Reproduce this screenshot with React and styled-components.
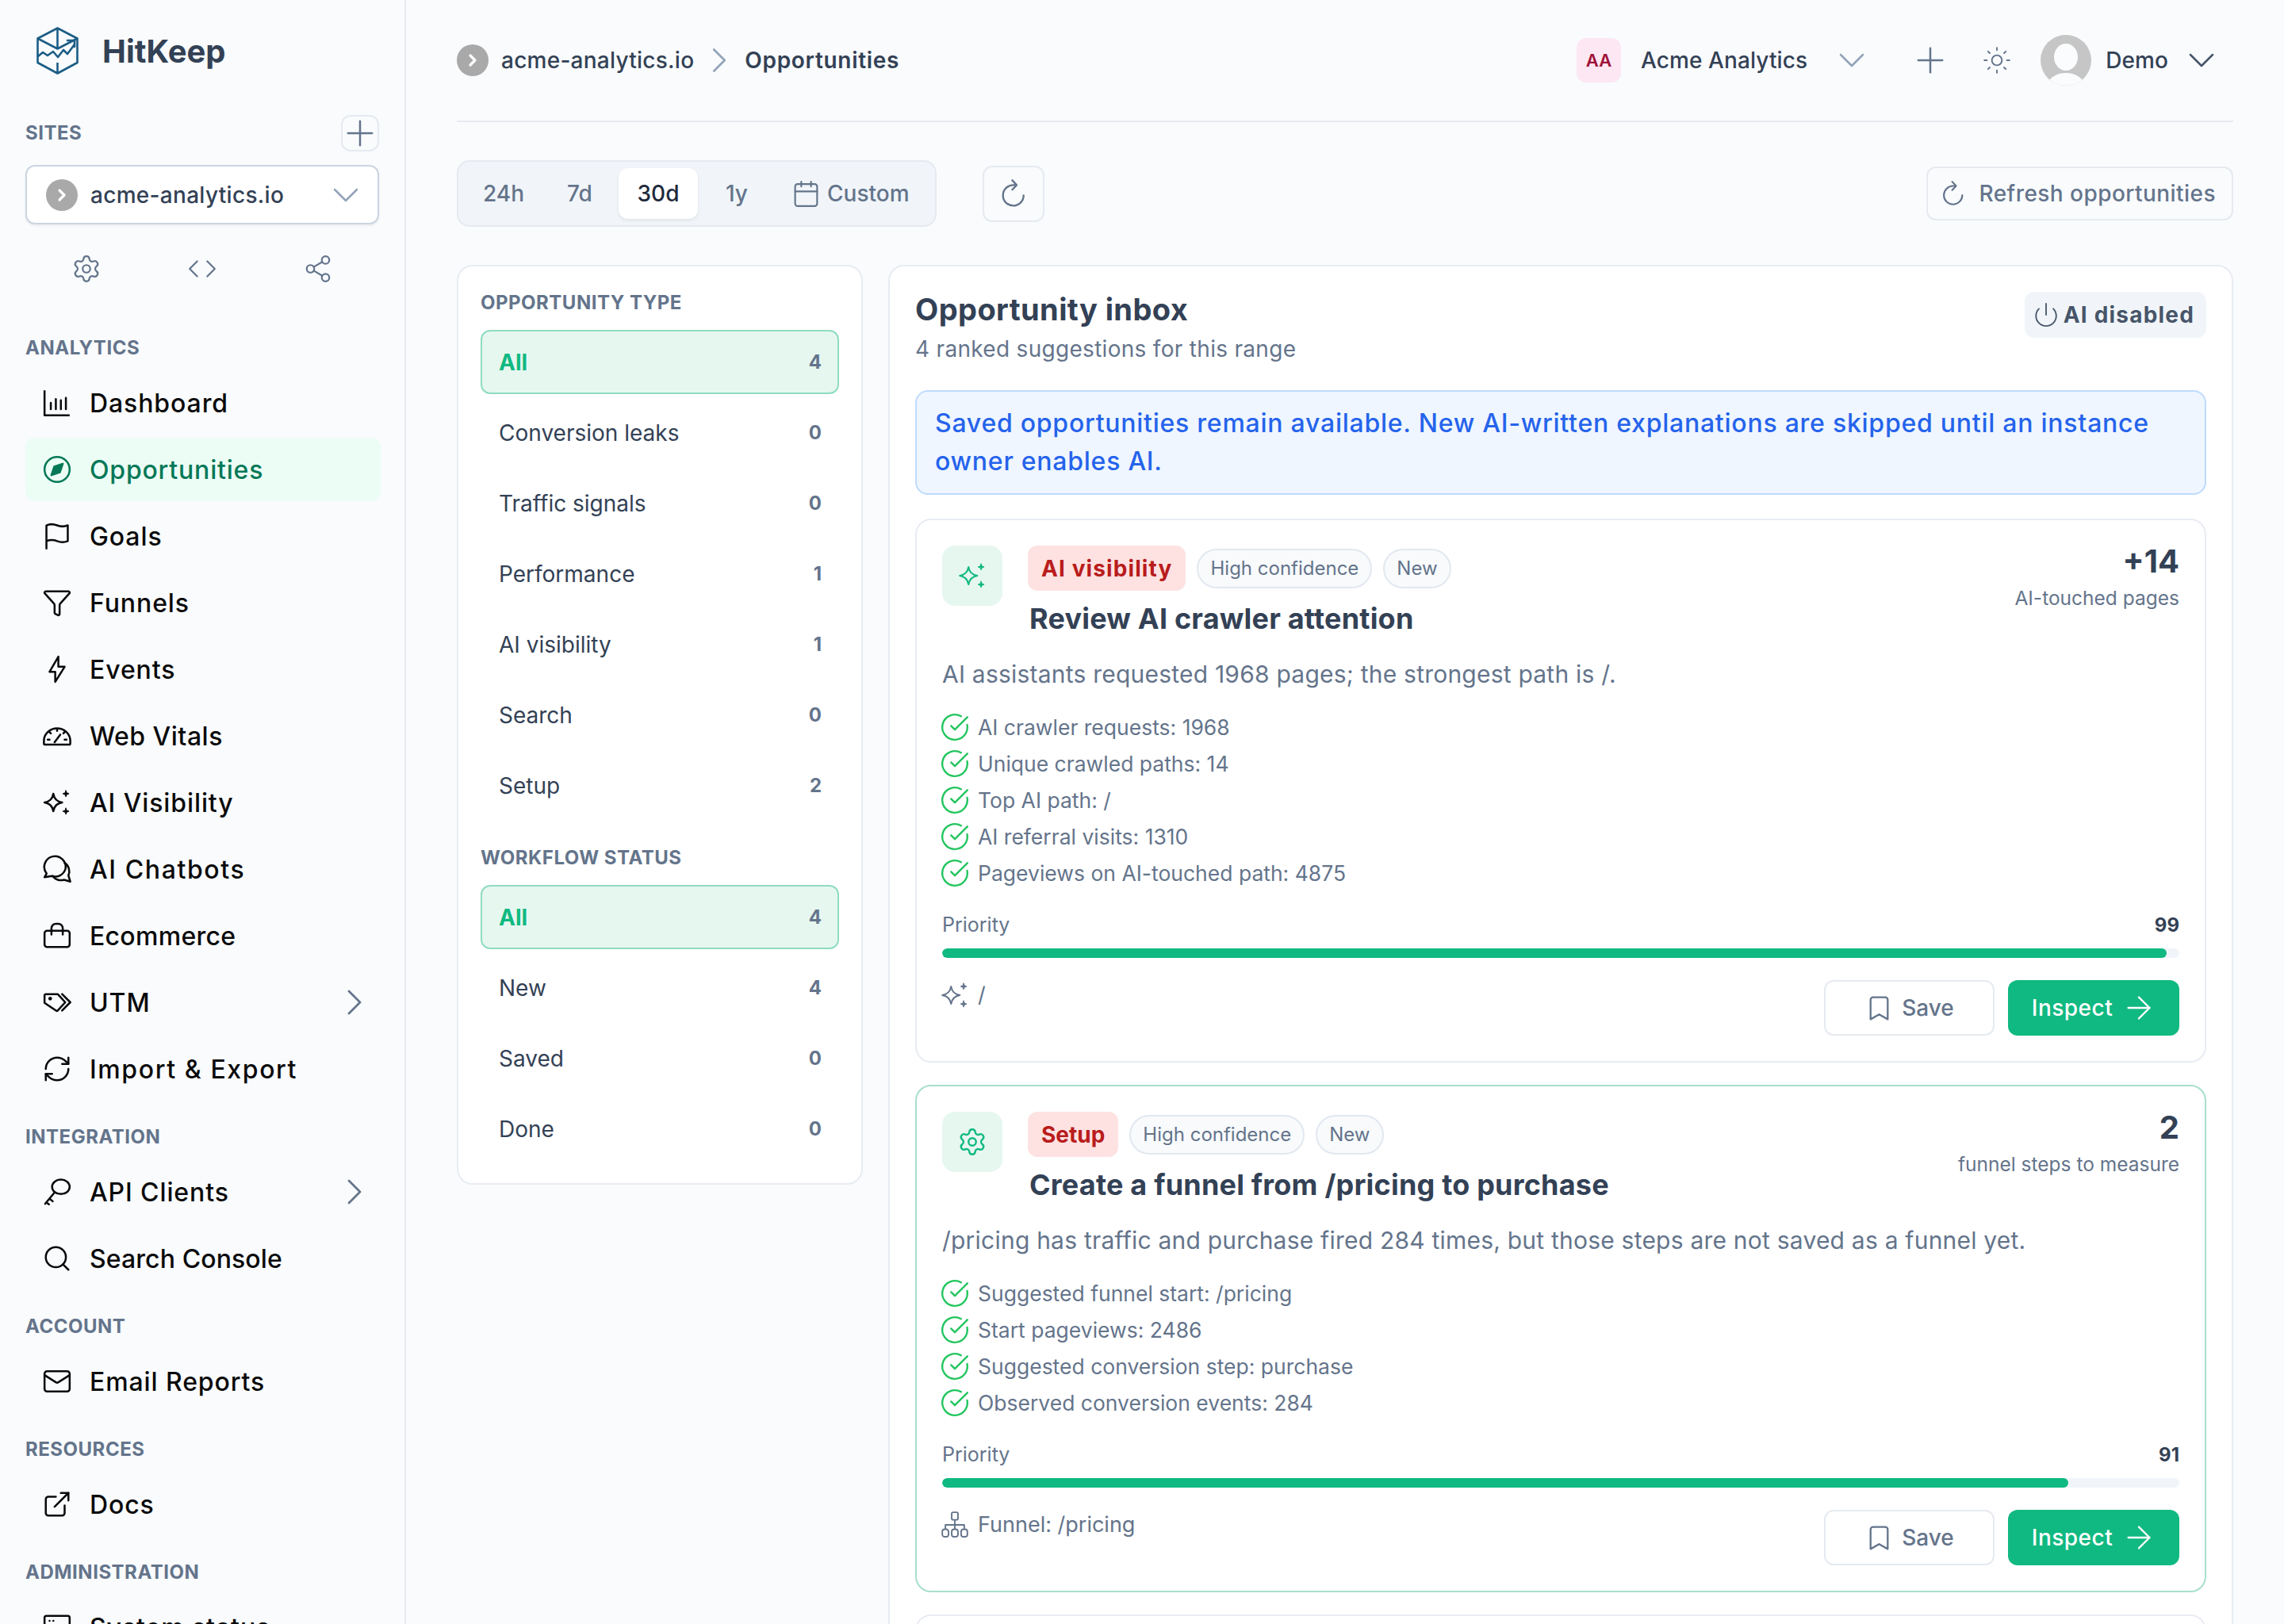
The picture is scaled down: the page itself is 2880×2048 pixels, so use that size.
import React from 'react';
import styled, { createGlobalStyle } from 'styled-components';
import {
  ArrowRight,
  Bookmark,
  Calendar,
  ChevronDown,
  ChevronRight,
  CircleCheckBig,
  Code,
  ExternalLink,
  Funnel,
  Mail,
  Plus,
  Power,
  RefreshCw,
  Search,
  Settings,
  Share2,
  Sun,
} from 'lucide-react';

const GlobalStyle = createGlobalStyle`
  html, body {
    margin: 0;
    padding: 0;
    background: #f9fbfd;
  }
  body {
    font-family: Inter, "Liberation Sans", sans-serif;
    color: #334155;
  }
  * { box-sizing: border-box; }
`;

const Ico = ({ size = 38, sw = 1.6, children }) => (
  <svg
    width={size}
    height={size}
    viewBox="0 0 24 24"
    fill="none"
    stroke="currentColor"
    strokeWidth={sw}
    strokeLinecap="round"
    strokeLinejoin="round"
  >
    {children}
  </svg>
);

const ChartIcon = () => (
  <Ico>
    <path d="M2 2v20h20" strokeLinecap="butt" />
    <path d="M7 17v-5M11 17V9M15 17v-7M19 17V8" />
  </Ico>
);
const CompassIcon = () => (
  <Ico>
    <circle cx="12" cy="12" r="10" />
    <path d="M16.5 7.5l-2.3 6.7-6.7 2.3 2.3-6.7z" fill="currentColor" />
  </Ico>
);
const FlagIcon = () => (
  <Ico>
    <path d="M3.5 22V3.5c3.5-1.6 6-1 8.5 0s5 1.4 8.5 0v12.500c-3.5 1.4-6 1-8.5 0s-5-1.4-8.5 0" />
  </Ico>
);
const BoltIcon = () => (
  <Ico>
    <path d="M13 2v8h5l-7.5 12v-8H6z" />
  </Ico>
);
const GaugeIcon = () => (
  <Ico>
    <path d="M1.5 16a10.5 10 0 0 1 21 0v2a1 1 0 0 1-1 1h-19a1 1 0 0 1-1-1z" />
    <path d="M12 6.5v1.500M6 9l1 1M18 9l-1 1M4.500 15H6M18 15h1.500M10 17l4.500-6" />
  </Ico>
);
const SparkIcon = ({ sw = 1.6 }) => (
  <Ico sw={sw}>
    <path d="M9 5c.6 4 2.7 6.3 7 7-4.3.7-6.4 3-7 7-.6-4-2.7-6.3-7-7 4.3-.7 6.4-3 7-7z" />
    <path
      d="M19 2.500l.7 1.800 1.800.7-1.800.7-.7 1.800-.7-1.800-1.800-.7 1.800-.7zM19 16.500l.7 1.800 1.800.7-1.800.7-.7 1.800-.7-1.800-1.800-.7 1.800-.7z"
      fill="currentColor"
      strokeWidth="0.6"
    />
  </Ico>
);
const ChatIcon = () => (
  <Ico>
    <path d="M2 18.500l1.600-3A8.500 8.500 0 1 1 18.600 12a8.500 8.500 0 0 1-11 5.500z" />
    <path d="M18 7a8 8 0 0 1 3 10l1.500 5-5-1.500a8 8 0 0 1-9-3" />
  </Ico>
);
const BagIcon = () => (
  <Ico>
    <rect x="2" y="8" width="20" height="13" rx="2" />
    <path d="M7.500 11V6A3.500 3.500 0 0 1 11 2.500h2A3.500 3.500 0 0 1 16.500 6v5" />
  </Ico>
);
const TagsIcon = () => (
  <Ico>
    <path d="M2 6.500a1 1 0 0 1 1-1h9.500l6 6.500-6 6.500a1 1 0 0 1-1.300.1L2 12.500z" />
    <path d="M16 5.500l6.500 6.500-6.500 6.500" />
    <circle cx="6.500" cy="9" r=".7" fill="currentColor" />
  </Ico>
);
const KeyIcon = () => (
  <Ico>
    <ellipse cx="15" cy="8" rx="7" ry="5.800" />
    <path d="M10 12.500L2.500 21.500M6 17.500l2.500 2M3.500 20.500l2 1.500" />
  </Ico>
);
const ServerIcon = () => (
  <Ico>
    <rect x="2" y="3" width="20" height="8" rx="1.500" />
    <path d="M6 7h.01M9 7h.01" />
  </Ico>
);
const OrgIcon = () => (
  <Ico sw={1.2}>
    <rect x="9.500" y="2" width="5" height="6" rx="1.200" />
    <path d="M12 8v7M4.500 15v-3h15v3" />
    <rect x="2" y="15.500" width="5" height="6" rx="2" />
    <rect x="9.500" y="15.500" width="5" height="6" rx="2" />
    <rect x="17" y="15.500" width="5" height="6" rx="2" />
  </Ico>
);
const ReloadIcon = ({ size = 38 }) => (
  <Ico size={size} sw={1.5}>
    <path d="M20 13.500a8.200 8.200 0 1 1-8.200-8.200h1.700" />
    <path d="M11 1.500l3.500 3.800L11 9" />
  </Ico>
);

const LogoMark = () => (
  <svg width="53" height="60" viewBox="0 0 53 60" fill="none" stroke="#1c5d85" strokeWidth="2.600" strokeLinejoin="round">
    <path d="M26.500 1.500L51.500 14.500V45L26.500 58.500 1.500 45V14.500z" />
    <path d="M1.500 14.500L26.500 27.500 51.500 14.500M26.500 1.500V27.500M26.500 45V58.500" />
    <path d="M2 37l6-5 6 4 7-5 6 7 7-9 5 5 9-12" strokeLinecap="round" />
    <path d="M39 17h9v8" strokeLinecap="round" />
  </svg>
);

const Avatar = () => (
  <svg width="64" height="64" viewBox="0 0 64 64">
    <defs>
      <clipPath id="avatar-clip">
        <circle cx="32" cy="32" r="32" />
      </clipPath>
    </defs>
    <g clipPath="url(#avatar-clip)">
      <rect width="64" height="64" fill="#c6c6c6" />
      <ellipse cx="32" cy="28" rx="15" ry="17" fill="#fbfcfd" />
      <ellipse cx="32" cy="66" rx="24" ry="18" fill="#fbfcfd" />
    </g>
  </svg>
);

const SiteDot = () => (
  <DotWrap>
    <ChevronRight size={24} strokeWidth={3.2} color="#fff" />
  </DotWrap>
);

const Page = styled.div`
  display: flex;
  width: 2880px;
  height: 2048px;
  overflow: hidden;
  background: #f9fbfd;
`;

/* lucide glyphs keep a margin inside their grid, so they sit oversized in a fixed slot */
const IconSlot = styled.span`
  display: flex;
  align-items: center;
  justify-content: center;
  flex: 0 0 32px;
  width: 32px;
  height: 32px;
  margin-left: ${(p) => (p.$auto ? 'auto' : `${p.$gap || 0}px`)};
  color: ${(p) => p.$color || 'currentColor'};
  svg {
    flex: none;
  }
`;

const Sidebar = styled.aside`
  flex: 0 0 512px;
  border-right: 2px solid #e6eaf0;
  padding: 34px 30px 0 32px;
`;

const Brand = styled.div`
  display: flex;
  align-items: center;
  gap: 30px;
  height: 60px;
  padding-left: 14px;
`;

const BrandName = styled.span`
  font-size: 40px;
  font-weight: 700;
  color: #334155;
`;

const SitesHead = styled.div`
  display: flex;
  align-items: center;
  justify-content: space-between;
  height: 46px;
  margin-top: 51px;
`;

const Label = styled.div`
  font-size: 24px;
  line-height: 32px;
  font-weight: 700;
  letter-spacing: 0.5px;
  text-transform: uppercase;
  color: #64748b;
`;

const MiniButton = styled.button`
  display: flex;
  align-items: center;
  justify-content: center;
  width: 48px;
  height: 46px;
  margin-right: 2px;
  padding: 0;
  border: 2px solid #e6eaf0;
  border-radius: 12px;
  background: #f9fbfd;
  color: #64748b;
  svg {
    flex: none;
  }
`;

const SiteSelect = styled.div`
  display: flex;
  align-items: center;
  gap: 16px;
  width: 446px;
  height: 75px;
  margin-top: 17px;
  padding: 0 24px;
  border: 2px solid #cbd5e1;
  border-radius: 12px;
  background: #fff;
  box-shadow: 0 2px 3px rgba(15, 23, 42, 0.06);
  color: #334155;
  font-size: 28px;
  font-weight: 500;
  letter-spacing: 0.3px;
`;

const DotWrap = styled.span`
  display: flex;
  align-items: center;
  justify-content: center;
  flex: 0 0 40px;
  height: 40px;
  border-radius: 50%;
  background: #a9a9a9;
`;

const SiteTools = styled.div`
  display: flex;
  align-items: center;
  justify-content: center;
  gap: 114px;
  width: 446px;
  height: 40px;
  margin-top: 36px;
  color: #64748b;
`;

const NavSection = styled.section`
  margin-top: ${(p) => p.$top || 30}px;
`;

const NavList = styled.div`
  display: flex;
  flex-direction: column;
  gap: 4px;
  margin-top: 13px;
`;

const NavItem = styled.div`
  display: flex;
  align-items: center;
  gap: 25px;
  height: 80px;
  padding: 0 17px 0 24px;
  border-radius: 12px;
  font-size: 32px;
  font-weight: 500;
  letter-spacing: ${(p) => p.$track ?? 0.9}px;
  color: ${(p) => (p.$active ? '#047857' : '#0a0a0a')};
  background: ${(p) => (p.$active ? '#ecfdf5' : 'transparent')};
`;

const Main = styled.main`
  flex: 1;
  min-width: 0;
  padding: 0 64px;
`;

const Topbar = styled.header`
  display: flex;
  align-items: center;
  height: 154px;
  padding-right: 24px;
  border-bottom: 2px solid #e6eaf0;
  font-size: 28px;
  font-weight: 500;
`;

const Crumb = styled.span`
  margin-left: 16px;
  color: #334155;
  font-weight: ${(p) => (p.$strong ? 600 : 500)};
  letter-spacing: ${(p) => (p.$strong ? 0.7 : 0.25)}px;
`;

const TeamMark = styled.span`
  display: flex;
  align-items: center;
  justify-content: center;
  width: 56px;
  height: 56px;
  margin-left: auto;
  border-radius: 12px;
  background: #fce7f3;
  color: #9f1239;
  font-size: 22px;
  font-weight: 600;
`;

const TopText = styled.span`
  margin-left: ${(p) => p.$gap}px;
  color: #334155;
  letter-spacing: 0.1px;
`;

const AvatarSlot = styled.span`
  display: flex;
  margin-left: 39px;
`;

const Toolbar = styled.div`
  display: flex;
  align-items: center;
  height: 84px;
  margin-top: 48px;
`;

const Range = styled.div`
  display: flex;
  align-items: center;
  gap: 2px;
  height: 84px;
  padding: 0 8px 0 10px;
  border: 2px solid #e6eaf0;
  border-radius: 16px;
  background: #f1f5f9;
`;

const RangeTab = styled.button`
  display: flex;
  align-items: center;
  justify-content: center;
  gap: 8px;
  min-width: ${(p) => (p.$active ? 100 : 94)}px;
  height: 64px;
  padding: ${(p) => (p.$wide ? '0 24px 0 20px' : '0 20px')};
  border: 0;
  border-radius: 12px;
  background: ${(p) => (p.$active ? '#fff' : 'transparent')};
  box-shadow: ${(p) => (p.$active ? '0 2px 4px rgba(15, 23, 42, 0.08)' : 'none')};
  color: ${(p) => (p.$active ? '#1e293b' : '#64748b')};
  font: 500 28px Inter, "Liberation Sans", sans-serif;
`;

const ReloadButton = styled.button`
  display: flex;
  align-items: center;
  justify-content: center;
  width: 78px;
  height: 71px;
  margin-left: 58px;
  padding: 0;
  border: 2px solid #e6eaf0;
  border-radius: 12px;
  background: transparent;
  color: #64748b;
`;

const RefreshButton = styled.button`
  display: flex;
  align-items: center;
  gap: 15px;
  height: 68px;
  margin-left: auto;
  padding: 0 20px 0 15px;
  border: 2px solid #e6eaf0;
  border-radius: 12px;
  background: transparent;
  color: #64748b;
  font: 500 28px Inter, "Liberation Sans", sans-serif;
  letter-spacing: 0.45px;
`;

const Columns = styled.div`
  display: flex;
  align-items: flex-start;
  gap: 32px;
  margin-top: 48px;
`;

const FilterCard = styled.nav`
  flex: 0 0 512px;
  padding: 30px 28px 28px;
  border: 2px solid #e8ecf2;
  border-radius: 20px;
  background: #fff;
`;

const FilterLabel = styled(Label)`
  margin-top: ${(p) => p.$top || 0}px;
`;

const FilterList = styled.div`
  display: flex;
  flex-direction: column;
  gap: 8px;
  margin-top: 18px;
`;

const FilterRow = styled.div`
  display: flex;
  align-items: center;
  justify-content: space-between;
  height: 81px;
  padding: 0 20px 0 21px;
  border: 2px solid ${(p) => (p.$active ? '#8fdcc0' : 'transparent')};
  border-radius: 12px;
  background: ${(p) => (p.$active ? '#e6f7f0' : 'transparent')};
  font-size: 28px;
  font-weight: ${(p) => (p.$active ? 700 : 400)};
  color: ${(p) => (p.$active ? '#10b981' : '#334155')};
`;

const FilterCount = styled.span`
  font-size: 24px;
  font-weight: 700;
  color: #64748b;
`;

const Inbox = styled.section`
  flex: 1;
  min-width: 0;
  height: 1900px;
  padding: 32px;
  border: 2px solid #e8ecf2;
  border-radius: 20px;
  background: #fff;
`;

const InboxHead = styled.div`
  display: flex;
  align-items: flex-start;
  justify-content: space-between;
  height: 93px;
`;

const InboxTitle = styled.h2`
  margin: -2px 0 0;
  font-size: 38px;
  line-height: 48px;
  font-weight: 700;
  letter-spacing: 0.4px;
  color: #334155;
`;

const InboxSub = styled.p`
  margin: 6px 0 0;
  font-size: 28px;
  line-height: 40px;
  letter-spacing: 0.3px;
  color: #64748b;
`;

const AiChip = styled.span`
  display: flex;
  align-items: center;
  gap: 5px;
  height: 58px;
  padding: 0 15px 0 10px;
  border-radius: 12px;
  background: #f1f5f9;
  color: #475569;
  font-size: 28px;
  font-weight: 700;
  letter-spacing: 1.2px;
`;

const Notice = styled.div`
  margin-top: 31px;
  padding: 16px 23px;
  border: 2px solid #bfdbfe;
  border-radius: 16px;
  background: #eff6ff;
  color: #2563eb;
  font-size: 32px;
  line-height: 48px;
  font-weight: 500;
  letter-spacing: 0.75px;
`;

const OppList = styled.div`
  display: flex;
  flex-direction: column;
  gap: 28px;
  margin-top: 30px;
`;

const OppCard = styled.article`
  padding: 32px;
  border: 2px solid ${(p) => (p.$accent ? '#a7dfca' : '#e8ecf2')};
  border-radius: 20px;
  background: #fff;
`;

const OppHead = styled.div`
  display: flex;
  align-items: flex-start;
  gap: 32px;
`;

const Tile = styled.span`
  display: flex;
  align-items: center;
  justify-content: center;
  flex: 0 0 76px;
  height: 76px;
  border-radius: 16px;
  background: #e6f7f0;
  color: #10b981;
`;

const OppHeadBody = styled.div`
  flex: 1;
  min-width: 0;
`;

const BadgeRow = styled.div`
  display: flex;
  align-items: center;
  gap: 14px;
  height: 57px;
`;

const KindBadge = styled.span`
  display: flex;
  align-items: center;
  height: 57px;
  padding: 0 17px;
  border-radius: 12px;
  background: #fee2e2;
  color: #b91c1c;
  font-size: 28px;
  font-weight: 700;
  letter-spacing: ${(p) => p.$track || 0}px;
`;

const Pill = styled.span`
  display: flex;
  align-items: center;
  height: 50px;
  padding: 0 15px;
  border: 2px solid #e2e8f0;
  border-radius: 25px;
  background: #f8fafc;
  color: #64748b;
  font-size: 24px;
`;

const OppTitle = styled.h3`
  margin: 7px 0 0 2px;
  font-size: 36px;
  line-height: 56px;
  font-weight: 700;
  letter-spacing: 0.2px;
  color: #334155;
`;

const Score = styled.div`
  flex: 0 0 auto;
  text-align: right;
`;

const ScoreValue = styled.div`
  margin-top: -2px;
  font-size: 40px;
  line-height: 44px;
  font-weight: 700;
  color: #334155;
`;

const ScoreCaption = styled.div`
  margin-top: 6px;
  font-size: 24.5px;
  line-height: 36px;
  color: #64748b;
`;

const OppText = styled.p`
  margin: 18px 0 0;
  font-size: 30px;
  line-height: 48px;
  letter-spacing: 0.22px;
  color: #64748b;
`;

const Checks = styled.ul`
  margin: 20px 0 0;
  padding: 0;
  list-style: none;
`;

const Check = styled.li`
  display: flex;
  align-items: center;
  gap: 13px;
  height: 46px;
  font-size: 26.5px;
  color: #64748b;
`;

const PriorityRow = styled.div`
  display: flex;
  align-items: center;
  justify-content: space-between;
  height: 36px;
  margin-top: 24px;
  font-size: 25px;
  color: #64748b;
`;

const PriorityValue = styled.span`
  font-size: 24px;
  font-weight: 700;
  color: #334155;
`;

const Track = styled.div`
  height: 12px;
  margin-top: 12px;
  border-radius: 6px;
  background: #f1f5f9;
  overflow: hidden;
`;

const Fill = styled.div`
  height: 100%;
  border-radius: 6px;
  background: #10b981;
`;

const OppFoot = styled.div`
  display: flex;
  align-items: flex-start;
  justify-content: space-between;
  margin-top: 28px;
`;

const Meta = styled.div`
  display: flex;
  align-items: center;
  gap: 13px;
  margin-top: 2px;
  font-size: 27px;
  color: #64748b;
`;

const Actions = styled.div`
  display: flex;
  gap: 17px;
`;

const SaveButton = styled.button`
  display: flex;
  align-items: center;
  justify-content: center;
  gap: 10px;
  width: 215px;
  height: 70px;
  padding: 0;
  border: 2px solid #e6eaf0;
  border-radius: 12px;
  background: #fff;
  color: #64748b;
  font: 500 28px Inter, "Liberation Sans", sans-serif;
`;

const InspectButton = styled.button`
  display: flex;
  align-items: center;
  justify-content: center;
  gap: 10px;
  width: 216px;
  height: 70px;
  padding: 0 0 0 2px;
  border: 0;
  border-radius: 12px;
  background: #10b981;
  color: #fff;
  font: 500 28px Inter, "Liberation Sans", sans-serif;
  letter-spacing: 0.5px;
`;

const lucideNav = { size: 38, strokeWidth: 1.6 };

const navGroups = [
  {
    label: 'Analytics',
    top: 64,
    items: [
      { name: 'Dashboard', icon: <ChartIcon /> },
      { name: 'Opportunities', icon: <CompassIcon />, active: true, track: 0.8 },
      { name: 'Goals', icon: <FlagIcon /> },
      { name: 'Funnels', icon: <Funnel {...lucideNav} /> },
      { name: 'Events', icon: <BoltIcon /> },
      { name: 'Web Vitals', icon: <GaugeIcon />, track: 0.5 },
      { name: 'AI Visibility', icon: <SparkIcon /> },
      { name: 'AI Chatbots', icon: <ChatIcon />, track: 1.6 },
      { name: 'Ecommerce', icon: <BagIcon />, track: 0.3 },
      { name: 'UTM', icon: <TagsIcon />, more: true },
      { name: 'Import & Export', icon: <RefreshCw {...lucideNav} />, track: 1.6 },
    ],
  },
  {
    label: 'Integration',
    items: [
      { name: 'API Clients', icon: <KeyIcon />, more: true },
      { name: 'Search Console', icon: <Search {...lucideNav} />, track: 0.1 },
    ],
  },
  { label: 'Account', items: [{ name: 'Email Reports', icon: <Mail {...lucideNav} /> }] },
  { label: 'Resources', items: [{ name: 'Docs', icon: <ExternalLink {...lucideNav} /> }] },
  { label: 'Administration', items: [{ name: 'System status', icon: <ServerIcon /> }] },
];

const typeFilters = [
  ['All', 4],
  ['Conversion leaks', 0],
  ['Traffic signals', 0],
  ['Performance', 1],
  ['AI visibility', 1],
  ['Search', 0],
  ['Setup', 2],
];

const statusFilters = [
  ['All', 4],
  ['New', 4],
  ['Saved', 0],
  ['Done', 0],
];

const opportunities = [
  {
    kind: 'AI visibility',
    track: 1.1,
    icon: <SparkIcon sw={1.3} />,
    title: 'Review AI crawler attention',
    score: '+14',
    caption: 'AI-touched pages',
    text: 'AI assistants requested 1968 pages; the strongest path is /.',
    checks: [
      'AI crawler requests: 1968',
      'Unique crawled paths: 14',
      'Top AI path: /',
      'AI referral visits: 1310',
      'Pageviews on AI-touched path: 4875',
    ],
    priority: 99,
    metaIcon: <SparkIcon sw={1.2} />,
    meta: '/',
  },
  {
    kind: 'Setup',
    accent: true,
    icon: <Settings size={38} strokeWidth={1.5} />,
    title: 'Create a funnel from /pricing to purchase',
    score: '2',
    caption: 'funnel steps to measure',
    text: '/pricing has traffic and purchase fired 284 times, but those steps are not saved as a funnel yet.',
    checks: [
      'Suggested funnel start: /pricing',
      'Start pageviews: 2486',
      'Suggested conversion step: purchase',
      'Observed conversion events: 284',
    ],
    priority: 91,
    metaIcon: <OrgIcon />,
    meta: 'Funnel: /pricing',
  },
];

function Filters({ rows }) {
  return (
    <FilterList>
      {rows.map(([name, count], i) => (
        <FilterRow key={name} $active={i === 0}>
          {name}
          <FilterCount>{count}</FilterCount>
        </FilterRow>
      ))}
    </FilterList>
  );
}

function Opportunity({ item }) {
  return (
    <OppCard $accent={item.accent}>
      <OppHead>
        <Tile>{item.icon}</Tile>
        <OppHeadBody>
          <BadgeRow>
            <KindBadge $track={item.track}>{item.kind}</KindBadge>
            <Pill>High confidence</Pill>
            <Pill>New</Pill>
          </BadgeRow>
          <OppTitle>{item.title}</OppTitle>
        </OppHeadBody>
        <Score>
          <ScoreValue>{item.score}</ScoreValue>
          <ScoreCaption>{item.caption}</ScoreCaption>
        </Score>
      </OppHead>
      <OppText>{item.text}</OppText>
      <Checks>
        {item.checks.map((c) => (
          <Check key={c}>
            <IconSlot $color="#22c55e">
              <CircleCheckBig size={38} strokeWidth={1.5} />
            </IconSlot>
            {c}
          </Check>
        ))}
      </Checks>
      <PriorityRow>
        Priority
        <PriorityValue>{item.priority}</PriorityValue>
      </PriorityRow>
      <Track>
        <Fill style={{ width: `${item.priority}%` }} />
      </Track>
      <OppFoot>
        <Meta>
          <IconSlot>{item.metaIcon}</IconSlot>
          {item.meta}
        </Meta>
        <Actions>
          <SaveButton>
            <Bookmark size={37} strokeWidth={1.5} />
            Save
          </SaveButton>
          <InspectButton>
            Inspect
            <ArrowRight size={46} strokeWidth={1.2} />
          </InspectButton>
        </Actions>
      </OppFoot>
    </OppCard>
  );
}

export default function App() {
  return (
    <Page>
      <GlobalStyle />
      <Sidebar>
        <Brand>
          <LogoMark />
          <BrandName>HitKeep</BrandName>
        </Brand>
        <SitesHead>
          <Label>Sites</Label>
          <MiniButton>
            <Plus size={52} strokeWidth={1.15} />
          </MiniButton>
        </SitesHead>
        <SiteSelect>
          <SiteDot />
          acme-analytics.io
          <IconSlot $auto $color="#94a3b8">
            <ChevronDown size={56} strokeWidth={1.1} />
          </IconSlot>
        </SiteSelect>
        <SiteTools>
          <IconSlot>
            <Settings size={38} strokeWidth={1.4} />
          </IconSlot>
          <IconSlot>
            <Code size={38} strokeWidth={1.4} />
          </IconSlot>
          <IconSlot>
            <Share2 size={38} strokeWidth={1.4} />
          </IconSlot>
        </SiteTools>
        {navGroups.map((group) => (
          <NavSection key={group.label} $top={group.top}>
            <Label>{group.label}</Label>
            <NavList>
              {group.items.map((it) => (
                <NavItem key={it.name} $active={it.active} $track={it.track}>
                  <IconSlot>{it.icon}</IconSlot>
                  {it.name}
                  {it.more && (
                    <IconSlot $auto $color="#64748b">
                      <ChevronRight size={56} strokeWidth={1.2} />
                    </IconSlot>
                  )}
                </NavItem>
              ))}
            </NavList>
          </NavSection>
        ))}
      </Sidebar>
      <Main>
        <Topbar>
          <SiteDot />
          <Crumb>acme-analytics.io</Crumb>
          <IconSlot $gap={16} $color="#94a3b8">
            <ChevronRight size={54} strokeWidth={1.2} />
          </IconSlot>
          <Crumb $strong>Opportunities</Crumb>
          <TeamMark>AA</TeamMark>
          <TopText $gap={25}>Acme Analytics</TopText>
          <IconSlot $gap={40} $color="#94a3b8">
            <ChevronDown size={56} strokeWidth={1.1} />
          </IconSlot>
          <IconSlot $gap={67} $color="#64748b">
            <Plus size={52} strokeWidth={1.15} />
          </IconSlot>
          <IconSlot $gap={52} $color="#64748b">
            <Sun size={38} strokeWidth={1.2} />
          </IconSlot>
          <AvatarSlot>
            <Avatar />
          </AvatarSlot>
          <TopText $gap={18}>Demo</TopText>
          <IconSlot $gap={26} $color="#475569">
            <ChevronDown size={56} strokeWidth={1.1} />
          </IconSlot>
        </Topbar>
        <Toolbar>
          <Range>
            <RangeTab>24h</RangeTab>
            <RangeTab>7d</RangeTab>
            <RangeTab $active>30d</RangeTab>
            <RangeTab>1y</RangeTab>
            <RangeTab $wide>
              <Calendar size={37} strokeWidth={1.4} />
              Custom
            </RangeTab>
          </Range>
          <ReloadButton>
            <ReloadIcon />
          </ReloadButton>
          <RefreshButton>
            <ReloadIcon size={34} />
            Refresh opportunities
          </RefreshButton>
        </Toolbar>
        <Columns>
          <FilterCard>
            <FilterLabel>Opportunity type</FilterLabel>
            <Filters rows={typeFilters} />
            <FilterLabel $top={35}>Workflow status</FilterLabel>
            <Filters rows={statusFilters} />
          </FilterCard>
          <Inbox>
            <InboxHead>
              <div>
                <InboxTitle>Opportunity inbox</InboxTitle>
                <InboxSub>4 ranked suggestions for this range</InboxSub>
              </div>
              <AiChip>
                <Power size={34} strokeWidth={1.3} />
                AI disabled
              </AiChip>
            </InboxHead>
            <Notice>
              Saved opportunities remain available. New AI-written explanations are skipped until an instance owner
              enables AI.
            </Notice>
            <OppList>
              {opportunities.map((item) => (
                <Opportunity key={item.title} item={item} />
              ))}
              <OppCard />
            </OppList>
          </Inbox>
        </Columns>
      </Main>
    </Page>
  );
}
